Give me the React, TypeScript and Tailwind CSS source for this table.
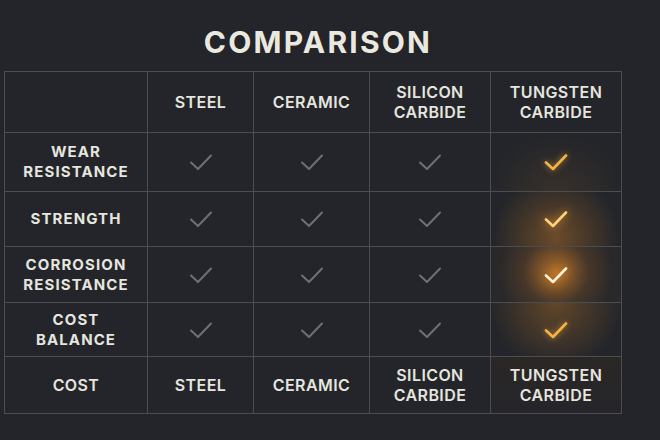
import React from "react";

const cols = ["STEEL", "CERAMIC", "SILICON CARBIDE", "TUNGSTEN CARBIDE"];
const rows = ["WEAR RESISTANCE", "STRENGTH", "CORROSION RESISTANCE", "COST BALANCE"];
const rowH = ["h-[58px]", "h-[54px]", "h-[55px]", "h-[53px]"];

function Check({ variant }: { variant: "gray" | "gold" | "bright" | "hot" }) {
  const color =
    variant === "gray" ? "#6e7073" : variant === "gold" ? "#f3b445" : variant === "bright" ? "#ffd27a" : "#fff1d6";
  const filter =
    variant === "gray"
      ? ""
      : variant === "gold"
      ? "drop-shadow-[0_0_3px_rgba(245,170,60,0.7)]"
      : variant === "bright"
      ? "drop-shadow-[0_0_5px_rgba(255,170,60,0.9)]"
      : "drop-shadow-[0_0_6px_rgba(255,160,40,1)]";
  return (
    <svg width="26" height="20" viewBox="0 0 26 20" className={filter}>
      <path
        d="M3 10.5 L10 17 L23 3.5"
        fill="none"
        stroke={color}
        strokeWidth={variant === "gray" ? 2 : 2.6}
        strokeLinecap="round"
        strokeLinejoin="round"
      />
    </svg>
  );
}

function Label({ text, header }: { text: string; header?: boolean }) {
  const parts = text.split(" ");
  return (
    <div
      className={`flex flex-col items-center justify-center text-center leading-[20px] text-[#e6e5df] ${
        header ? "text-[16px] font-semibold tracking-[0.4px]" : "text-[15px] font-bold tracking-[1.1px]"
      }`}
    >
      {parts.map((p, i) => (
        <span key={i}>{p}</span>
      ))}
    </div>
  );
}

export default function App() {
  return (
    <div
      className="w-[660px] h-[440px] bg-[#23252a] overflow-hidden relative"
      style={{ fontFamily: "Inter, 'Liberation Sans', sans-serif" }}
    >
      <div className="h-[71px] flex items-center justify-center pt-[14px] pr-[24px]">
        <h1 className="text-[30px] font-bold tracking-[2.2px] text-[#ebe9df]">COMPARISON</h1>
      </div>
      <div className="ml-[4px] w-[618px] bg-[#4b4d51] p-px relative">
        <div className="grid grid-cols-[142px_105px_115px_120px_130px] gap-px">
          {/* header */}
          <div className="bg-[#23252a] h-[60px]" />
          {cols.map((c) => (
            <div key={c} className="bg-[#23252a] h-[60px] flex items-center justify-center">
              <Label text={c} header />
            </div>
          ))}
          {rows.map((r, ri) => (
            <React.Fragment key={r}>
              <div className={`bg-[#23252a] ${rowH[ri]} flex items-center justify-center`}>
                <Label text={r} />
              </div>
              {[0, 1, 2].map((ci) => (
                <div key={ci} className={`bg-[#23252a] ${rowH[ri]} flex items-center justify-center`}>
                  <Check variant="gray" />
                </div>
              ))}
              <div className={`bg-[#23252a] ${rowH[ri]} flex items-center justify-center relative overflow-hidden`}>
                <div
                  className={`absolute inset-0 ${
                    ri === 0
                      ? "bg-[radial-gradient(circle_at_50%_120%,rgba(230,140,40,0.12),transparent_75%)]"
                      : ri === 1
                      ? "bg-[radial-gradient(circle_at_50%_85%,rgba(235,140,40,0.36),transparent_80%)]"
                      : ri === 2
                      ? "bg-[radial-gradient(circle_at_50%_45%,rgba(245,145,40,0.66),rgba(200,120,40,0.22)_45%,rgba(120,80,40,0.08)_80%)]"
                      : "bg-[radial-gradient(circle_at_50%_0%,rgba(230,140,40,0.32),transparent_80%)]"
                  }`}
                />
                <div className="relative">
                  <Check variant={ri === 0 ? "gold" : ri === 1 ? "bright" : ri === 2 ? "hot" : "gold"} />
                </div>
              </div>
            </React.Fragment>
          ))}
          <div className="bg-[#23252a] h-[56px] flex items-center justify-center">
            <Label text="COST" header />
          </div>
          {cols.map((c, i) => (
            <div
              key={c}
              className={`h-[56px] flex items-center justify-center ${
                i === 3 ? "bg-[linear-gradient(180deg,#2a2724,#25252a)]" : "bg-[#23252a]"
              }`}
            >
              <Label text={c} header />
            </div>
          ))}
        </div>
      </div>
    </div>
  );
}
